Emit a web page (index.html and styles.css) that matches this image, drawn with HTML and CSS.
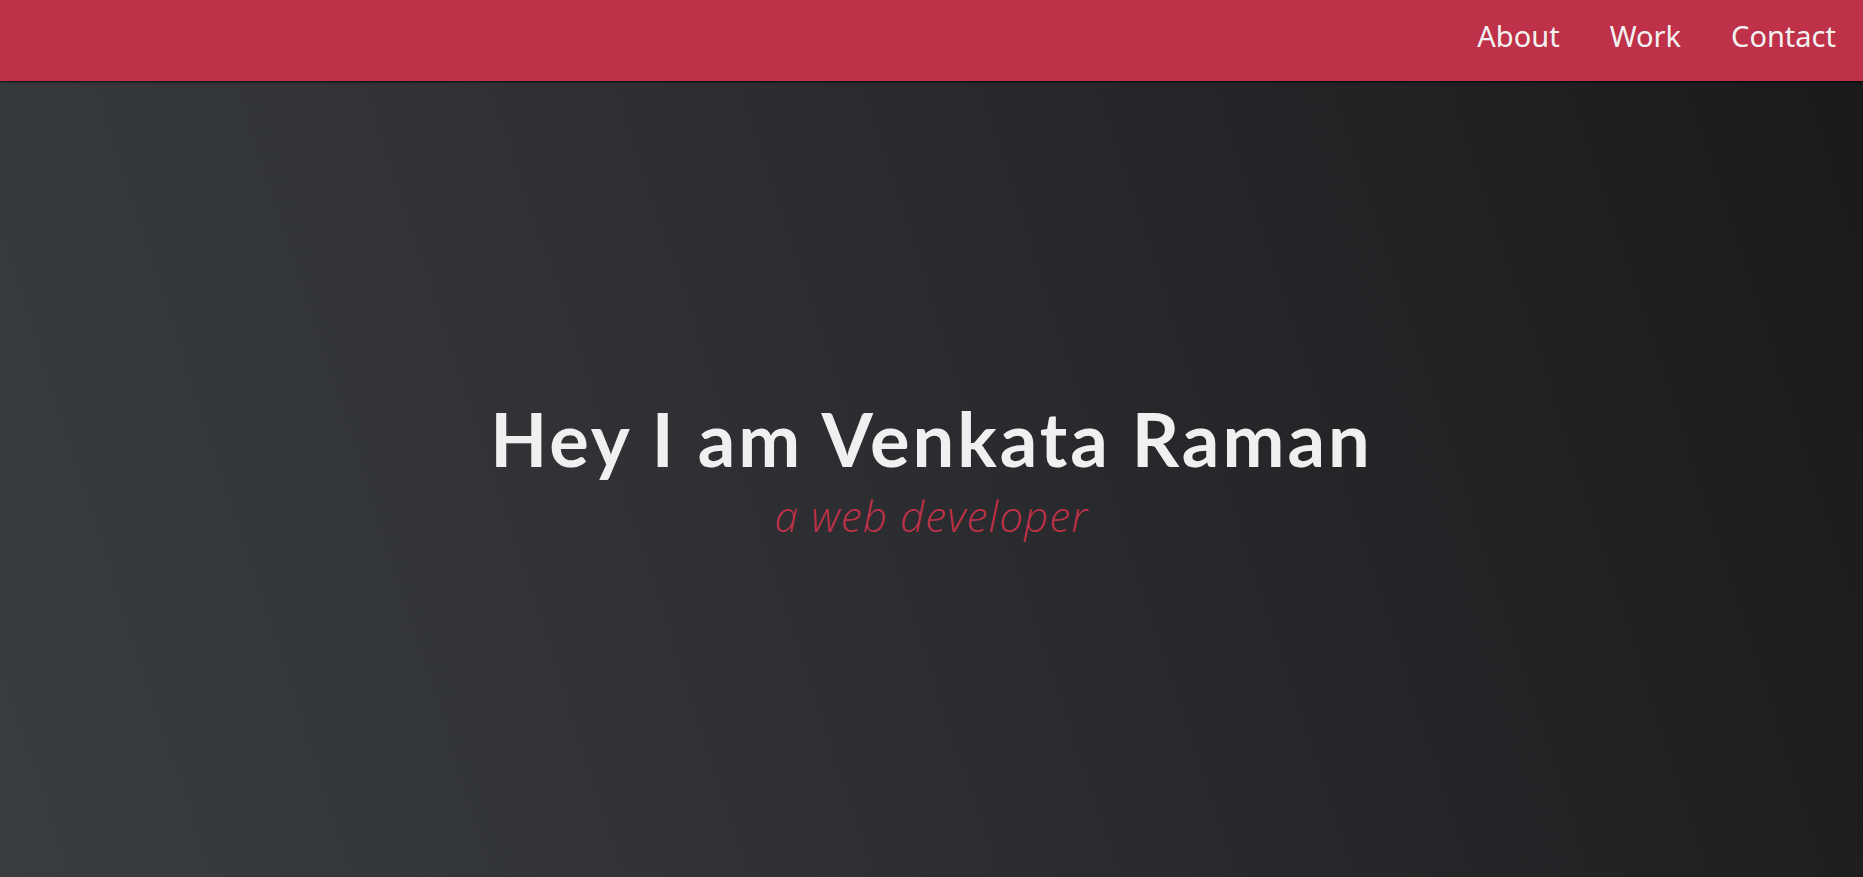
FILE: index.html
```html
<!DOCTYPE html>
<html lang="en">
<head>
<meta charset="utf-8">
<title>Venkata Raman</title>
<link rel="stylesheet" href="styles.css">
</head>
<body>
<header class="nav">
  <ul class="nav-list">
    <li><a href="#about" class="nav-link">About</a></li>
    <li><a href="#work" class="nav-link">Work</a></li>
    <li><a href="#contact" class="nav-link">Contact</a></li>
  </ul>
</header>
<main class="hero">
  <div class="hero-text">
    <h1 class="hero-title">Hey I am Venkata Raman</h1>
    <p class="hero-sub">a web developer</p>
  </div>
</main>
</body>
</html>
```

FILE: styles.css
```css
* { box-sizing: border-box; }
html, body { margin: 0; padding: 0; height: 100%; }
body {
  font-family: "Open Sans", "Liberation Sans", sans-serif;
  background: #1c1c1e;
  overflow: hidden;
}
.nav {
  position: relative;
  z-index: 2;
  height: 81px;
  padding-bottom: 10px;
  background: #be3148;
  display: flex;
  justify-content: flex-end;
  align-items: center;
  box-shadow: 0 1px 2px rgba(0,0,0,0.8);
}
.nav-list {
  list-style: none;
  margin: 0;
  padding: 0 27px 0 0;
  display: flex;
  gap: 50px;
}
.nav-link {
  color: #f2f2f2;
  text-decoration: none;
  font-family: "Noto Sans", "Open Sans", sans-serif;
  font-size: 29px;
  font-weight: 400;
}
.hero {
  height: calc(100% - 81px);
  background: linear-gradient(72deg, #3a3d40 0%, #2b2c2f 50%, #1a1a1c 100%);
  display: flex;
  align-items: center;
  justify-content: center;
}
.hero-text {
  text-align: center;
  margin-top: -19px;
}
.hero-title {
  margin: 0;
  color: #f0f0f0;
  font-family: "Lato", "Liberation Sans", sans-serif;
  font-weight: 700;
  font-size: 74px;
  letter-spacing: 3px;
  line-height: 1.1;
}
.hero-sub {
  margin: 12px 0 0;
  color: #be3148;
  font-family: "Open Sans", sans-serif;
  font-weight: 300;
  font-style: italic;
  font-size: 42px;
  letter-spacing: 1.2px;
  line-height: 1.2;
}
```
